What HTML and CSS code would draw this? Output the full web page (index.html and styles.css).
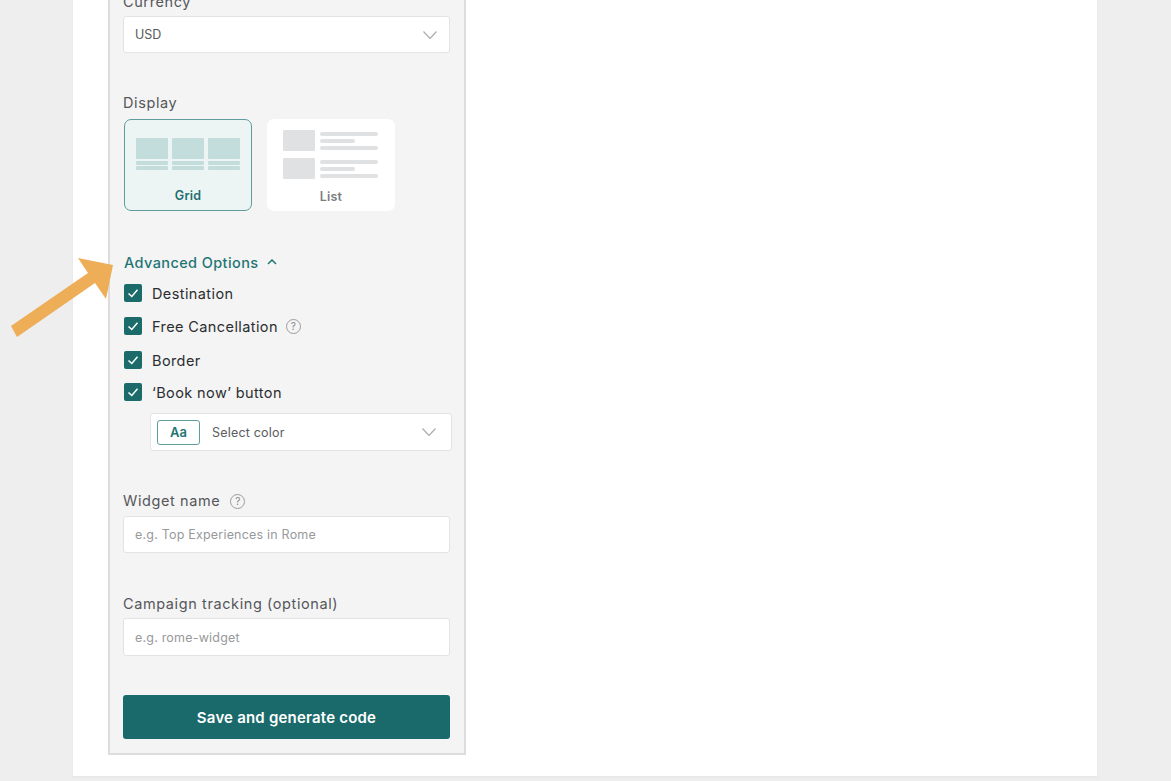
FILE: index.html
```html
<!DOCTYPE html>
<html>
  <head>
    <meta charset="utf-8">
    <title>Widget settings</title>
    <link rel="stylesheet" href="styles.css">
  </head>
  <body>
    <div class="page">
      <form class="panel">
        <div class="label">Currency</div>
        <div class="select">
          <span>USD</span>
          <svg class="chevron" viewBox="0 0 14 8"><path d="M.5.5 7 7.5 13.500.5"/></svg>
        </div>

        <div class="label display-label">Display</div>
        <div class="display-options">
          <div class="display-card selected">
            <div class="grid-preview">
              <div class="grid-col"><i class="grid-thumb"></i><i class="grid-line"></i><i class="grid-line"></i></div>
              <div class="grid-col"><i class="grid-thumb"></i><i class="grid-line"></i><i class="grid-line"></i></div>
              <div class="grid-col"><i class="grid-thumb"></i><i class="grid-line"></i><i class="grid-line"></i></div>
            </div>
            <div class="card-name">Grid</div>
          </div>
          <div class="display-card">
            <div class="list-preview">
              <div class="list-row">
                <i class="list-thumb"></i>
                <div class="list-lines"><i></i><i class="short"></i><i></i></div>
              </div>
              <div class="list-row">
                <i class="list-thumb"></i>
                <div class="list-lines"><i></i><i class="short"></i><i></i></div>
              </div>
            </div>
            <div class="card-name">List</div>
          </div>
        </div>

        <div class="advanced">
          Advanced Options
          <svg class="chevron-up" viewBox="0 0 10 6"><path d="M1 5 5 1l4 4"/></svg>
        </div>

        <div class="check-row">
          <span class="check"><svg viewBox="0 0 18 18"><path d="M4.500 9.500 7.800 12.500 13.500 5.800"/></svg></span>
          Destination
        </div>
        <div class="check-row row-wide">
          <span class="check"><svg viewBox="0 0 18 18"><path d="M4.500 9.500 7.800 12.500 13.500 5.800"/></svg></span>
          Free Cancellation
          <span class="help">?</span>
        </div>
        <div class="check-row row-tight">
          <span class="check"><svg viewBox="0 0 18 18"><path d="M4.500 9.500 7.800 12.500 13.500 5.800"/></svg></span>
          Border
        </div>
        <div class="check-row">
          <span class="check"><svg viewBox="0 0 18 18"><path d="M4.500 9.500 7.800 12.500 13.500 5.800"/></svg></span>
          ‘Book now’ button
        </div>

        <div class="color-select">
          <span class="swatch">Aa</span>
          <span class="color-text">Select color</span>
          <svg class="chevron" viewBox="0 0 14 8"><path d="M.5.5 7 7.500 13.500.5"/></svg>
        </div>

        <div class="label name-label">Widget name <span class="help">?</span></div>
        <input class="text-input" type="text" placeholder="e.g. Top Experiences in Rome">

        <div class="label campaign-label">Campaign tracking (optional)</div>
        <input class="text-input campaign-input" type="text" placeholder="e.g. rome-widget">

        <button class="save" type="button">Save and generate code</button>
      </form>
    </div>

    <!-- annotation arrow drawn over the page -->
    <svg class="arrow" viewBox="0 0 120 340"><polygon points="78,258 113,265 106,299 95,283 17,337 11,326 88,273"/></svg>
  </body>
</html>
```

FILE: styles.css
```css
* {
  box-sizing: border-box;
}
html, body {
  margin: 0;
  height: 781px;
  overflow: hidden;
}
body {
  background-color: #eeeeee;
  font-family: "Inter", "Liberation Sans", sans-serif;
  color: #3b3d40;
}

.page {
  width: 1024px;
  height: 796px;
  margin: -20px 0 0 73px;
  padding: 0 0 21px 35px;
  background-color: #ffffff;
  box-shadow: 0 1px 2px #e2e2e2;
}
.panel {
  width: 358px;
  height: 775px;
  padding: 10px 14px 0 13px;
  background-color: #f4f4f4;
  border: solid #dcdcdc 2px;
}

.label {
  height: 20px;
  font-size: 14.500px;
  letter-spacing: 0.6px;
  line-height: 20px;
  color: #55575b;
}
.display-label {
  margin-top: 40px;
}
.name-label {
  display: flex;
  align-items: center;
  gap: 10px;
  margin-top: 40px;
}
.campaign-label {
  margin-top: 41px;
}

.select {
  display: flex;
  align-items: center;
  justify-content: space-between;
  width: 327px;
  height: 37px;
  margin-top: 4px;
  padding: 0 12px 0 11px;
  background-color: #ffffff;
  border: solid #e3e3e3 1px;
  border-radius: 3px;
  font-size: 12.500px;
  color: #55585c;
}
.chevron {
  width: 14px;
  height: 8px;
  fill: none;
  stroke: #a9abae;
  stroke-width: 1.200;
}

.display-options {
  display: flex;
  gap: 15px;
  margin: 6px 0 0 1px;
}
.display-card {
  width: 128px;
  height: 92px;
  background-color: #ffffff;
  border: solid transparent 1px;
  border-radius: 7px;
  text-align: center;
}
.display-card.selected {
  background-color: #edf5f4;
  border: solid #5f9c9c 1.500px;
}
.card-name {
  font-size: 12.500px;
  font-weight: 600;
  letter-spacing: 0.2px;
  line-height: 16px;
  color: #7b7d80;
}
.selected .card-name {
  color: #1f6e6e;
}

.grid-preview {
  display: flex;
  gap: 4px;
  height: 68px;
  padding: 18px 10.500px 0;
}
.grid-col {
  display: flex;
  flex-direction: column;
  width: 32px;
}
.grid-col i {
  display: block;
  background-color: #c3dddc;
  border-radius: 1px;
}
.grid-thumb {
  height: 21px;
  margin-bottom: 2px;
}
.grid-line {
  height: 4px;
  margin-bottom: 1px;
}

.list-preview {
  height: 69px;
  padding: 10px 15px 0;
}
.list-row {
  display: flex;
  gap: 5px;
  height: 21px;
  margin-bottom: 7px;
}
.list-thumb {
  display: block;
  width: 32px;
  height: 21px;
  background-color: #e0e1e2;
  border-radius: 1px;
}
.list-lines {
  display: flex;
  flex-direction: column;
  gap: 3px;
  padding-top: 2px;
}
.list-lines i {
  display: block;
  width: 58px;
  height: 4px;
  background-color: #e0e1e2;
  border-radius: 2px;
}
.list-lines i.short {
  width: 35px;
}

.advanced {
  display: flex;
  align-items: center;
  gap: 8px;
  height: 20px;
  margin: 41px 0 12px 1px;
  font-size: 14.500px;
  font-weight: 500;
  letter-spacing: 0.4px;
  color: #1f7574;
}
.chevron-up {
  width: 10px;
  height: 6px;
  fill: none;
  stroke: #1f7574;
  stroke-width: 1.500;
}

.check-row {
  display: flex;
  align-items: center;
  height: 18px;
  margin: 0 0 15px 1px;
  font-size: 14.500px;
  letter-spacing: 0.4px;
  color: #2b2d30;
}
.row-wide {
  margin-bottom: 16px;
}
.row-tight {
  margin-bottom: 14px;
}
.check {
  width: 18px;
  height: 18px;
  margin-right: 10px;
  background-color: #1b6b6b;
  border-radius: 2px;
}
.check svg {
  display: block;
  fill: none;
  stroke: #ffffff;
  stroke-width: 1.500;
}
.help {
  display: flex;
  align-items: center;
  justify-content: center;
  width: 15px;
  height: 15px;
  margin-left: 8px;
  border: solid #9a9c9f 1px;
  border-radius: 50%;
  font-size: 10px;
  letter-spacing: 0;
  color: #85878a;
}
.name-label .help {
  margin-left: 0;
}

.color-select {
  display: flex;
  align-items: center;
  width: 302px;
  height: 38px;
  margin: -3px 0 0 27px;
  padding: 0 15px 0 6px;
  background-color: #ffffff;
  border: solid #e3e3e3 1px;
  border-radius: 3px;
}
.swatch {
  width: 43px;
  height: 25px;
  border: solid #5f9c9c 1px;
  border-radius: 3px;
  font-size: 13px;
  font-weight: 600;
  line-height: 23px;
  text-align: center;
  color: #1f7574;
}
.color-text {
  flex: 1;
  margin-left: 12px;
  font-size: 12.500px;
  letter-spacing: 0.2px;
  color: #5a5c60;
}

.text-input {
  display: block;
  width: 327px;
  height: 37px;
  margin-top: 5px;
  padding: 0 11px;
  background-color: #ffffff;
  border: solid #e3e3e3 1px;
  border-radius: 3px;
  font-family: "Inter", "Liberation Sans", sans-serif;
  font-size: 12.500px;
  letter-spacing: 0.2px;
}
.text-input::placeholder {
  color: #97999c;
}
.campaign-input {
  height: 38px;
  margin-top: 4px;
}

.save {
  display: block;
  width: 327px;
  height: 44px;
  margin-top: 39px;
  background-color: #1a6a6b;
  border: none;
  border-radius: 3px;
  font-family: "Inter", "Liberation Sans", sans-serif;
  font-size: 15px;
  font-weight: 600;
  letter-spacing: 0.2px;
  color: #ffffff;
}

.arrow {
  position: absolute;
  top: 0;
  left: 0;
  width: 120px;
  height: 340px;
  fill: #eead57;
}
```
